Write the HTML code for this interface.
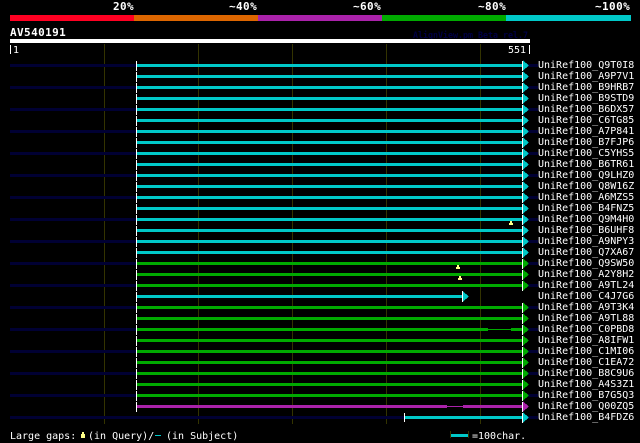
<!DOCTYPE html>
<html><head><meta charset="utf-8"><style>
html,body{margin:0;padding:0;background:#000;width:640px;height:443px;overflow:hidden}
svg{display:block;shape-rendering:crispEdges}
text{font-family:"DejaVu Sans Mono","Liberation Mono",monospace;font-size:10px;fill:#fff}
.b{font-weight:bold;font-size:11px;letter-spacing:.4px}
</style></head><body>
<svg width="640" height="443" viewBox="0 0 640 443" xmlns="http://www.w3.org/2000/svg">
<rect width="640" height="443" fill="#000"/>
<!-- legend -->
<rect x="10" y="15" width="124" height="6" fill="#ff0022"/>
<rect x="134" y="15" width="124" height="6" fill="#dd6600"/>
<rect x="258" y="15" width="124" height="6" fill="#aa22aa"/>
<rect x="382" y="15" width="124" height="6" fill="#00aa00"/>
<rect x="506" y="15" width="125" height="6" fill="#00c8c8"/>
<text class="b" x="113" y="10">20%</text>
<text class="b" x="229" y="10">~40%</text>
<text class="b" x="353" y="10">~60%</text>
<text class="b" x="478" y="10">~80%</text>
<text class="b" x="595" y="10">~100%</text>
<text class="b" x="10" y="36">AV540191</text>
<text x="413" y="38" textLength="115" lengthAdjust="spacingAndGlyphs" style="font-size:9px;font-weight:bold;fill:#000044">AlignView.pm Beta rel.7</text>
<rect x="10" y="39" width="520" height="4" fill="#fff"/>
<rect x="10" y="45" width="1" height="9" fill="#fff"/>
<rect x="529" y="45" width="1" height="9" fill="#fff"/>
<text x="13" y="53">1</text>
<text x="508" y="53">551</text>
<!-- olive guides -->
<path fill="#333300" d="M104 44h1v380h-1zM198 44h1v380h-1zM292 44h1v380h-1zM386 44h1v380h-1zM480 44h1v380h-1z"/>
<!-- navy stripes -->
<path fill="#000033" d="M10 64h126v3H10zM10 86h126v3H10zM10 108h126v3H10zM10 130h126v3H10zM10 152h126v3H10zM10 174h126v3H10zM10 196h126v3H10zM10 218h126v3H10zM10 240h126v3H10zM10 262h126v3H10zM10 284h126v3H10zM10 306h126v3H10zM10 328h126v3H10zM10 350h126v3H10zM10 372h126v3H10zM10 394h126v3H10zM10 416h394v3H10z"/>
<path fill="#000033" d="M523 64h15v3h-15zM523 86h15v3h-15zM523 108h15v3h-15zM523 130h15v3h-15zM523 152h15v3h-15zM523 174h15v3h-15zM523 196h15v3h-15zM523 218h15v3h-15zM523 240h15v3h-15zM523 262h15v3h-15zM523 284h15v3h-15zM523 306h15v3h-15zM523 328h15v3h-15zM523 350h15v3h-15zM523 372h15v3h-15zM523 394h15v3h-15zM523 416h15v3h-15z"/>
<!-- cyan bars -->
<path fill="#00c8c8" d="M137 64h385v3H137zM137 75h385v3H137zM137 86h385v3H137zM137 97h385v3H137zM137 108h385v3H137zM137 119h385v3H137zM137 130h385v3H137zM137 141h385v3H137zM137 152h385v3H137zM137 163h385v3H137zM137 174h385v3H137zM137 185h385v3H137zM137 196h385v3H137zM137 207h385v3H137zM137 218h385v3H137zM137 229h385v3H137zM137 240h385v3H137zM137 251h385v3H137zM137 295h325v3H137zM405 416h117v3H405z"/>
<!-- green bars -->
<path fill="#00aa00" d="M137 262h385v3H137zM137 273h385v3H137zM137 284h385v3H137zM137 306h385v3H137zM137 317h385v3H137zM137 328h351v3H137zM488 329h23v1h-23zM511 328h11v3h-11zM137 339h385v3H137zM137 350h385v3H137zM137 361h385v3H137zM137 372h385v3H137zM137 383h385v3H137zM137 394h385v3H137z"/>
<!-- purple bar -->
<path fill="#aa22aa" d="M137 405h310v3H137zM447 406h16v1h-16zM463 405h59v3h-59z"/>
<!-- white verticals -->
<path stroke="#fff" stroke-width="1" stroke-dasharray="10 1" fill="none" d="M136.5 61V412M522.500 61V292M522.500 303V424"/>
<path fill="#fff" d="M462 291h1v11h-1zM404 413h1v9h-1z"/>
<!-- triangles -->
<path fill="#00c8c8" d="M523 60.500l6 5-6 5zM523 71.500l6 5-6 5zM523 82.500l6 5-6 5zM523 93.500l6 5-6 5zM523 104.500l6 5-6 5zM523 115.500l6 5-6 5zM523 126.500l6 5-6 5zM523 137.500l6 5-6 5zM523 148.500l6 5-6 5zM523 159.500l6 5-6 5zM523 170.500l6 5-6 5zM523 181.500l6 5-6 5zM523 192.500l6 5-6 5zM523 203.500l6 5-6 5zM523 214.500l6 5-6 5zM523 225.500l6 5-6 5zM523 236.500l6 5-6 5zM523 247.500l6 5-6 5zM463 291.500l6 5-6 5zM523 412.500l6 5-6 5z"/>
<path fill="#00aa00" d="M523 258.500l6 5-6 5zM523 269.500l6 5-6 5zM523 280.500l6 5-6 5zM523 302.500l6 5-6 5zM523 313.500l6 5-6 5zM523 324.500l6 5-6 5zM523 335.500l6 5-6 5zM523 346.500l6 5-6 5zM523 357.500l6 5-6 5zM523 368.500l6 5-6 5zM523 379.500l6 5-6 5zM523 390.500l6 5-6 5z"/>
<path fill="#aa22aa" d="M523 401.500l6 5-6 5z"/>
<!-- yellow markers -->
<path fill="#ffff88" d="M510 221h2v2h1v2h-4v-2h1zM457 265h2v2h1v2h-4v-2h1zM459 276h2v2h1v2h-4v-2h1z"/>
<!-- names -->
<text x="538" y="68">UniRef100_Q9T0I8</text>
<text x="538" y="79">UniRef100_A9P7V1</text>
<text x="538" y="90">UniRef100_B9HRB7</text>
<text x="538" y="101">UniRef100_B9STD9</text>
<text x="538" y="112">UniRef100_B6DX57</text>
<text x="538" y="123">UniRef100_C6TG85</text>
<text x="538" y="134">UniRef100_A7P841</text>
<text x="538" y="145">UniRef100_B7FJP6</text>
<text x="538" y="156">UniRef100_C5YHS5</text>
<text x="538" y="167">UniRef100_B6TR61</text>
<text x="538" y="178">UniRef100_Q9LHZ0</text>
<text x="538" y="189">UniRef100_Q8W16Z</text>
<text x="538" y="200">UniRef100_A6MZS5</text>
<text x="538" y="211">UniRef100_B4FNZ5</text>
<text x="538" y="222">UniRef100_Q9M4H0</text>
<text x="538" y="233">UniRef100_B6UHF8</text>
<text x="538" y="244">UniRef100_A9NPY3</text>
<text x="538" y="255">UniRef100_Q7XA67</text>
<text x="538" y="266">UniRef100_Q9SW50</text>
<text x="538" y="277">UniRef100_A2Y8H2</text>
<text x="538" y="288">UniRef100_A9TL24</text>
<text x="538" y="299">UniRef100_C4J7G6</text>
<text x="538" y="310">UniRef100_A9T3K4</text>
<text x="538" y="321">UniRef100_A9TL88</text>
<text x="538" y="332">UniRef100_C0PBD8</text>
<text x="538" y="343">UniRef100_A8IFW1</text>
<text x="538" y="354">UniRef100_C1MI06</text>
<text x="538" y="365">UniRef100_C1EA72</text>
<text x="538" y="376">UniRef100_B8C9U6</text>
<text x="538" y="387">UniRef100_A4S3Z1</text>
<text x="538" y="398">UniRef100_B7G5Q3</text>
<text x="538" y="409">UniRef100_Q00ZQ5</text>
<text x="538" y="420">UniRef100_B4FDZ6</text>
<!-- footer -->
<text x="10" y="439">Large gaps:</text>
<path fill="#ffff88" d="M82 432h2v2h1v2h-4v-2h1zM81 436h4v2h-4z"/>
<text x="88" y="439">(in Query)/</text>
<rect x="155" y="435" width="6" height="1" fill="#00c8c8"/>
<text x="166" y="439">(in Subject)</text>
<path fill="#333300" d="M450 431h1v7h-1zM468 431h1v7h-1z"/>
<rect x="451" y="434" width="17" height="3" fill="#00c8c8"/>
<text x="472" y="439">=100char.</text>
</svg>
</body></html>
